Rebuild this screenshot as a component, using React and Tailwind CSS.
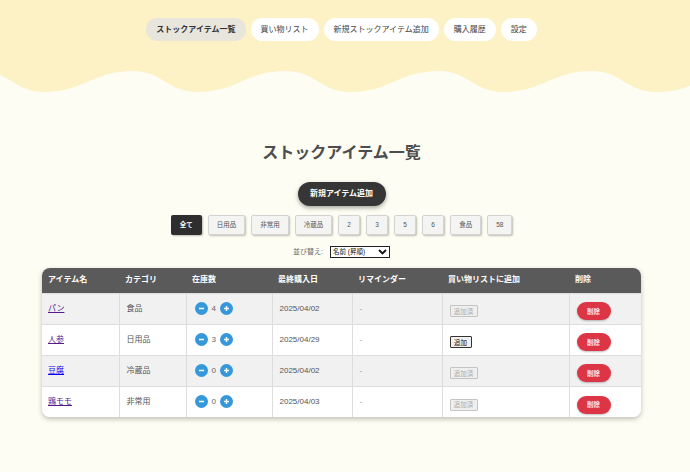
const navItems = ['ストックアイテム一覧', '買い物リスト', '新規ストックアイテム追加', '購入履歴', '設定'];
const filters = ['全て', '日用品', '非常用', '冷蔵品', '2', '3', '5', '6', '食品', '58'];
const columns = [
  { label: 'アイテム名', w: 'w-[77px]' },
  { label: 'カテゴリ', w: 'w-[67px]' },
  { label: '在庫数', w: 'w-[86px]' },
  { label: '最終購入日', w: 'w-[80px]' },
  { label: 'リマインダー', w: 'w-[90px]' },
  { label: '買い物リストに追加', w: 'w-[127px]' },
  { label: '削除', w: 'w-[72px]' },
];
const items = [
  { name: 'パン', visited: true, category: '食品', qty: 4, date: '2025/04/02', added: true },
  { name: '人参', visited: true, category: '日用品', qty: 3, date: '2025/04/29', added: false },
  { name: '豆腐', visited: false, category: '冷蔵品', qty: 0, date: '2025/04/02', added: true },
  { name: '鶏モモ', visited: true, category: '非常用', qty: 0, date: '2025/04/03', added: true },
];

const font = { fontFamily: "'Liberation Sans', 'Noto Sans CJK JP', sans-serif" };

function RoundBtn({ plus }) {
  return (
    <span className="w-[13px] h-[13px] rounded-full bg-[#3498db] flex items-center justify-center">
      <svg width="7" height="7" viewBox="0 0 7 7">
        <path d="M1 3.5h5" stroke="white" strokeWidth="1.4" />
        {plus && <path d="M3.5 1v5" stroke="white" strokeWidth="1.4" />}
      </svg>
    </span>
  );
}

export default function App() {
  return (
    <div className="min-h-[472px] bg-[#fdfdf3] text-[#333]" style={font}>
      {/* header */}
      <div className="bg-[#fdf2c5] h-[60px] pt-[18px] pr-[7px]">
        <nav className="flex justify-center gap-[5px]">
          {navItems.map((n, i) => (
            <span
              key={n}
              className={`h-[23px] px-[10px] rounded-full flex items-center text-[8px] ${
                i === 0 ? 'bg-[#e8e6dc] font-bold text-[#333]' : 'bg-white text-[#444]'
              }`}
            >
              {n}
            </span>
          ))}
        </nav>
      </div>
      <svg width="690" height="40" viewBox="0 0 690 40" className="block">
        <path
          fill="#fdf2c5"
          d="M-20,11 C9,11 15,32 44,32 C84,32 93,11 133,11 C162,11 168,32 197,32 C237,32 246,11 286,11 C315,11 321,32 350,32 C390,32 399,11 439,11 C468,11 474,32 503,32 C543,32 552,11 592,11 C621,11 627,32 656,32 C696,32 705,11 745,11 L745,0 L-20,0 Z"
        />
      </svg>

      <main className="w-[683px] flex flex-col items-center pt-[43px] pb-[40px]">
        <h1 className="text-[16px] leading-[20px] font-bold text-[#4d4d4d]">ストックアイテム一覧</h1>

        <button className="mt-[19px] h-[24px] w-[88px] rounded-full bg-[#363636] text-white text-[8px] font-bold shadow-[0_2px_4px_rgba(0,0,0,0.35)]">
          新規アイテム追加
        </button>

        <div className="mt-[9px] flex gap-[6px]">
          {filters.map((f, i) => (
            <span
              key={f}
              className={`h-[20px] px-[8px] min-w-[22px] flex items-center justify-center rounded-[2px] text-[6.5px] shadow-[1px_1px_2px_rgba(0,0,0,0.25)] ${
                i === 0
                  ? 'bg-[#2e2e2e] text-white font-bold px-[9px]'
                  : 'bg-[#f4f4f2] border border-[#d4d4d4] text-[#555]'
              }`}
            >
              {f}
            </span>
          ))}
        </div>

        <div className="mt-[11px] flex items-center gap-[7px] text-[7px] text-[#666]">
          <span>並び替え:</span>
          <div className="w-[60px] h-[12px] border border-[#222] bg-white flex items-center justify-between px-[2px] text-[6.5px] text-[#111]">
            <span>名前 (昇順)</span>
            <svg width="9" height="6" viewBox="0 0 9 6">
              <path d="M1 1l3.5 3.5L8 1" fill="none" stroke="#111" strokeWidth="1.8" />
            </svg>
          </div>
        </div>

        <div className="mt-[10px] w-[599px] rounded-[8px] overflow-hidden shadow-[0_2px_5px_rgba(0,0,0,0.25)] bg-white">
          <table className="w-full table-fixed border-collapse">
            <thead>
              <tr className="bg-[#5a5a5a] h-[25px]">
                {columns.map(c => (
                  <th key={c.label} className={`${c.w} text-left pl-[6px] text-white text-[8px] font-bold`}>
                    {c.label}
                  </th>
                ))}
              </tr>
            </thead>
            <tbody>
              {items.map((it, i) => (
                <tr key={it.name} className={`h-[31px] border-t border-[#ddd] ${i % 2 === 0 ? 'bg-[#f1f1f1]' : 'bg-white'}`}>
                  <td className="pl-[6px] border-r border-[#ddd] text-[8px]">
                    <a href="#" className={`underline ${it.visited ? 'text-[#551a8b]' : 'text-[#0000ee]'}`}>{it.name}</a>
                  </td>
                  <td className="pl-[7px] border-r border-[#ddd] text-[8px] text-[#555]">{it.category}</td>
                  <td className="pl-[8px] border-r border-[#ddd]">
                    <div className="flex items-center gap-[4px] text-[8px] text-[#666]">
                      <RoundBtn />
                      <span className="w-[4px] text-center">{it.qty}</span>
                      <RoundBtn plus />
                    </div>
                  </td>
                  <td className="pl-[7px] border-r border-[#ddd] text-[8px] text-[#555]">{it.date}</td>
                  <td className="pl-[7px] border-r border-[#ddd] text-[8px] text-[#999]">-</td>
                  <td className="pl-[7px] border-r border-[#ddd]">
                    {it.added ? (
                      <span className="inline-flex items-center justify-center h-[12px] w-[28px] border border-[#c4c4c4] bg-[#efefef] text-[6.5px] text-[#aaa] rounded-[1px]">
                        追加済
                      </span>
                    ) : (
                      <span className="inline-flex items-center justify-center h-[12px] w-[22px] border border-[#333] bg-[#f0f0f0] text-[6.5px] text-[#111] rounded-[1px]">
                        追加
                      </span>
                    )}
                  </td>
                  <td className="pl-[7px]">
                    <span className="inline-flex items-center justify-center w-[34px] h-[18px] rounded-full bg-[#dc3545] text-[#ffe4ea] text-[6.5px] font-bold shadow-[0_1px_2px_rgba(0,0,0,0.25)]">
                      削除
                    </span>
                  </td>
                </tr>
              ))}
            </tbody>
          </table>
        </div>
      </main>
    </div>
  );
}
